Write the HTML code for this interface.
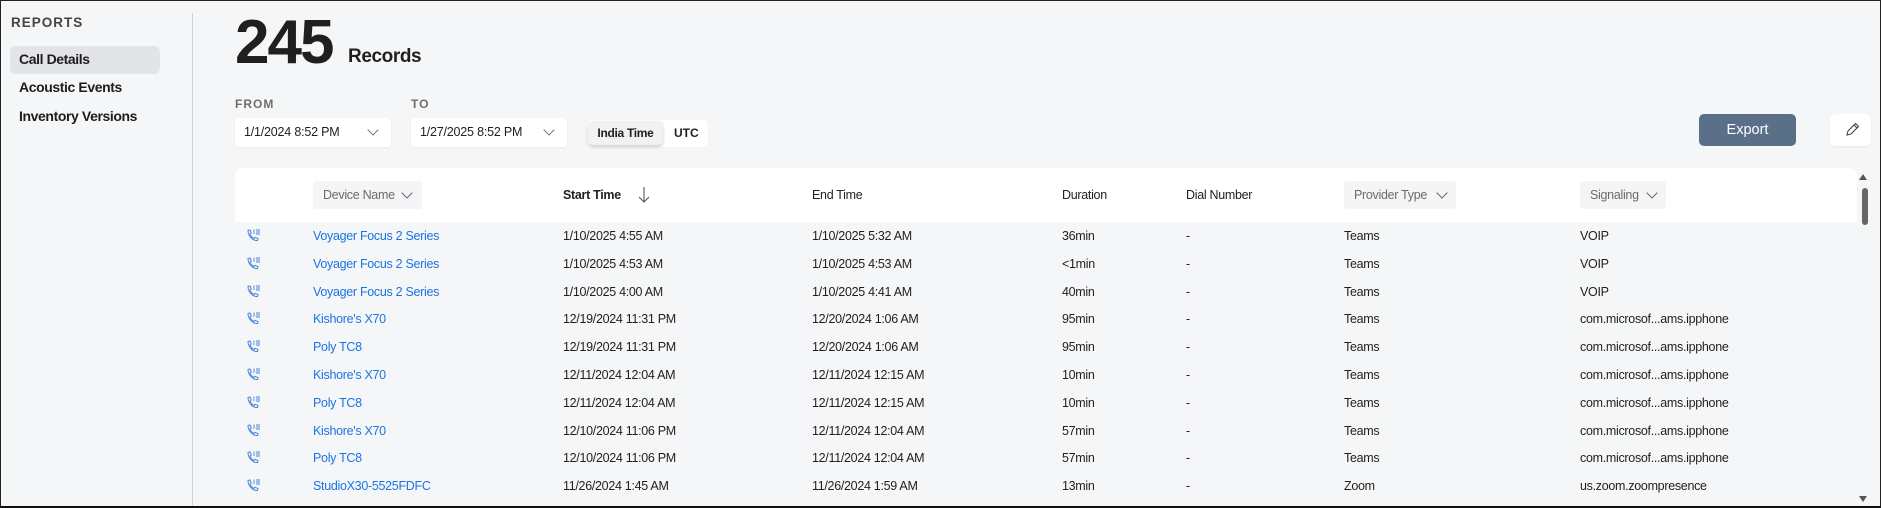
<!DOCTYPE html>
<html><head><meta charset="utf-8"><style>
*{box-sizing:border-box;margin:0;padding:0}
body{width:1881px;height:508px;overflow:hidden;background:#f5f6f8;font-family:"Liberation Sans",sans-serif;color:#1f1f1f;position:relative}
.frame{position:absolute;left:0;top:0;width:1881px;height:508px;border:1px solid #222;border-bottom:2px solid #111}
.abs{position:absolute;white-space:nowrap}
.nav{font-size:14px;font-weight:bold;color:#1d1d1d;letter-spacing:-0.4px}
.lbl{font-size:12px;font-weight:bold;color:#6e6e6e;letter-spacing:1px}
.box{position:absolute;background:#fff;border-radius:4px;box-shadow:0 1px 2px rgba(0,0,0,.05);font-size:12.5px;line-height:29px;padding-left:9px;letter-spacing:-0.2px}
.chev{position:absolute;width:8px;height:8px;border-right:1.3px solid #777;border-bottom:1.3px solid #777;transform:rotate(45deg)}
.cell{position:absolute;font-size:12.5px;white-space:nowrap;transform:translateY(-50%);letter-spacing:-0.3px}
.lnk{color:#1b74e4}
.hd{font-size:12.5px;color:#222}
.fbox{position:absolute;background:#f4f5f7;border-radius:3px;height:28px;top:181px;font-size:12.5px;color:#6b6b6b;line-height:28px;padding-left:10px;letter-spacing:-0.3px}
</style></head><body>
<div class="abs" style="left:11px;top:15px;font-size:13.5px;color:#444;letter-spacing:1px;font-weight:bold">REPORTS</div>
<div class="abs" style="left:10px;top:46px;width:150px;height:28px;background:#e2e4e8;border-radius:6px"></div>
<div class="abs nav" style="left:19px;top:51px">Call Details</div>
<div class="abs nav" style="left:19px;top:79px">Acoustic Events</div>
<div class="abs nav" style="left:19px;top:108px">Inventory Versions</div>
<div class="abs" style="left:192px;top:13px;width:1px;height:495px;background:#cfd1d5"></div>

<div class="abs" style="left:235px;top:10px;font-size:62px;font-weight:bold;letter-spacing:-2px;line-height:66px">245</div>
<div class="abs" style="left:348px;top:46px;font-size:19px;font-weight:bold;letter-spacing:-0.4px">Records</div>

<div class="abs lbl" style="left:235px;top:97px">FROM</div>
<div class="abs lbl" style="left:411px;top:97px">TO</div>
<div class="box" style="left:235px;top:118px;width:156px;height:29px">1/1/2024 8:52 PM<div class="chev" style="left:134px;top:8px"></div></div>
<div class="box" style="left:411px;top:118px;width:156px;height:29px">1/27/2025 8:52 PM<div class="chev" style="left:134px;top:8px"></div></div>
<div class="abs" style="left:587px;top:120px;width:121px;height:27px;background:#fff;border-radius:5px"></div>
<div class="abs" style="left:588px;top:121px;width:75px;height:24px;background:#f1f2f4;border-radius:5px;box-shadow:0 2px 3px rgba(0,0,0,.2);font-size:12px;font-weight:bold;line-height:24px;text-align:center;letter-spacing:-0.3px">India Time</div>
<div class="abs" style="left:674px;top:121px;font-size:12px;font-weight:bold;line-height:24px">UTC</div>

<div class="abs" style="left:1699px;top:114px;width:97px;height:32px;background:#5a7089;border-radius:5px;color:#fff;font-size:14.5px;line-height:32px;text-align:center">Export</div>
<div class="abs" style="left:1830px;top:114px;width:41px;height:32px;background:#fff;border-radius:5px;box-shadow:0 1px 2px rgba(0,0,0,.06)">
<svg width="41" height="32" viewBox="0 0 41 32"><path d="M17 21 L18 17 L25.5 9.5 L28.5 12.5 L21 20 Z M24 11 L27 14" fill="none" stroke="#444" stroke-width="1.1"/></svg></div>

<div class="abs" style="left:235px;top:168px;width:1622px;height:54px;background:#fff;border-radius:8px 8px 0 0"></div>
<div class="fbox" style="left:313px;width:109px">Device Name<div class="chev" style="left:90px;top:8px;border-color:#666"></div></div>
<div class="cell hd" style="left:563px;top:195px;font-weight:bold">Start Time</div>
<svg class="abs" style="left:638px;top:186px" width="12" height="18"><path d="M6 1V16 M1 11L6 16L11 11" fill="none" stroke="#555" stroke-width="1.1"/></svg>
<div class="cell hd" style="left:812px;top:195px">End Time</div>
<div class="cell hd" style="left:1062px;top:195px">Duration</div>
<div class="cell hd" style="left:1186px;top:195px">Dial Number</div>
<div class="fbox" style="left:1344px;width:112px">Provider Type<div class="chev" style="left:94px;top:8px;border-color:#666"></div></div>
<div class="fbox" style="left:1580px;width:86px">Signaling<div class="chev" style="left:68px;top:8px;border-color:#666"></div></div>

<div class="abs" style="left:1859px;top:174px;width:0;height:0;border-left:4px solid transparent;border-right:4px solid transparent;border-bottom:6px solid #555"></div>
<div class="abs" style="left:1862px;top:188px;width:6px;height:37px;background:#666;border-radius:3px"></div>
<div class="abs" style="left:1859px;top:496px;width:0;height:0;border-left:4px solid transparent;border-right:4px solid transparent;border-top:6px solid #555"></div>

<div id="rows"></div>
<script>
var d=[
["Voyager Focus 2 Series","1/10/2025 4:55 AM","1/10/2025 5:32 AM","36min","Teams","VOIP"],
["Voyager Focus 2 Series","1/10/2025 4:53 AM","1/10/2025 4:53 AM","<1min","Teams","VOIP"],
["Voyager Focus 2 Series","1/10/2025 4:00 AM","1/10/2025 4:41 AM","40min","Teams","VOIP"],
["Kishore's X70","12/19/2024 11:31 PM","12/20/2024 1:06 AM","95min","Teams","com.microsof...ams.ipphone"],
["Poly TC8","12/19/2024 11:31 PM","12/20/2024 1:06 AM","95min","Teams","com.microsof...ams.ipphone"],
["Kishore's X70","12/11/2024 12:04 AM","12/11/2024 12:15 AM","10min","Teams","com.microsof...ams.ipphone"],
["Poly TC8","12/11/2024 12:04 AM","12/11/2024 12:15 AM","10min","Teams","com.microsof...ams.ipphone"],
["Kishore's X70","12/10/2024 11:06 PM","12/11/2024 12:04 AM","57min","Teams","com.microsof...ams.ipphone"],
["Poly TC8","12/10/2024 11:06 PM","12/11/2024 12:04 AM","57min","Teams","com.microsof...ams.ipphone"],
["StudioX30-5525FDFC","11/26/2024 1:45 AM","11/26/2024 1:59 AM","13min","Zoom","us.zoom.zoompresence"]];
var h="";
function esc(s){return s.replace(/&/g,"&amp;").replace(/</g,"&lt;")}
d.forEach(function(r,i){var y=236+i*27.8;
h+='<svg class="abs" style="left:245px;top:'+(y-8)+'px" width="16" height="16" viewBox="0 0 16 16"><path d="M3 2.5 L5 2 L6.3 5 L5 6 C5.7 8 7 9.5 9 10.5 L10 9.3 L13 10.5 L12.5 12.5 C8 13 3 8 3 2.5Z" fill="none" stroke="#4a86d8" stroke-width="1"/><path d="M9 1.5V6 M11 2H15 M11 4H15 M11 6H15" stroke="#4a86d8" stroke-width="0.9"/></svg>';
h+='<div class="cell lnk" style="left:313px;top:'+y+'px">'+esc(r[0])+'</div>';
h+='<div class="cell" style="left:563px;top:'+y+'px">'+r[1]+'</div>';
h+='<div class="cell" style="left:812px;top:'+y+'px">'+r[2]+'</div>';
h+='<div class="cell" style="left:1062px;top:'+y+'px">'+esc(r[3])+'</div>';
h+='<div class="cell" style="left:1186px;top:'+y+'px">-</div>';
h+='<div class="cell" style="left:1344px;top:'+y+'px">'+r[4]+'</div>';
h+='<div class="cell" style="left:1580px;top:'+y+'px">'+r[5]+'</div>';});
document.getElementById("rows").innerHTML=h;
</script>
<div class="frame"></div>
</body></html>
